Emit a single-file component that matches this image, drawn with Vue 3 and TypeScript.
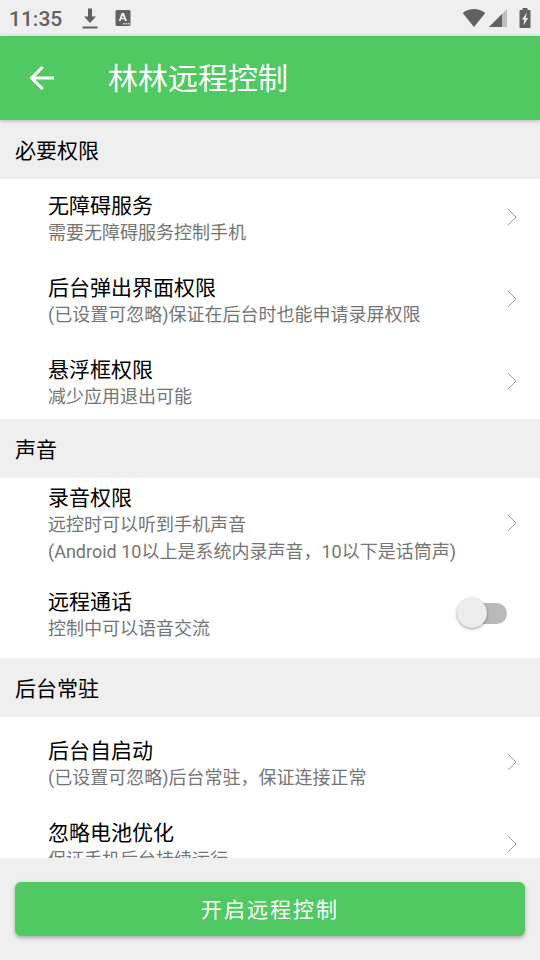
<script setup lang="ts">
import { ref } from 'vue'

interface Row {
  id: string
  title: string
  lines: string[]
  toggle?: boolean
}

interface Section {
  id: string
  name: string
  rows: Row[]
}

const voiceCall = ref<boolean>(false)

const sections: Section[] = [
  {
    id: 'required',
    name: '必要权限',
    rows: [
      { id: 'accessibility', title: '无障碍服务', lines: ['需要无障碍服务控制手机'] },
      { id: 'popup', title: '后台弹出界面权限', lines: ['(已设置可忽略)保证在后台时也能申请录屏权限'] },
      { id: 'overlay', title: '悬浮框权限', lines: ['减少应用退出可能'] },
    ],
  },
  {
    id: 'sound',
    name: '声音',
    rows: [
      {
        id: 'record',
        title: '录音权限',
        lines: ['远控时可以听到手机声音', '(Android 10以上是系统内录声音，10以下是话筒声)'],
      },
      { id: 'call', title: '远程通话', lines: ['控制中可以语音交流'], toggle: true },
    ],
  },
  {
    id: 'background',
    name: '后台常驻',
    rows: [
      { id: 'autostart', title: '后台自启动', lines: ['(已设置可忽略)后台常驻，保证连接正常'] },
      { id: 'battery', title: '忽略电池优化', lines: ['保证手机后台持续运行'] },
    ],
  },
]
</script>

<template>
  <div class="screen">
    <div class="status">
      <span class="time">11:35</span>
      <svg class="download" width="16" height="22" viewBox="0 0 16 22" aria-hidden="true">
        <path d="M6 1.500h4v8h4L8 16 2 9.500h4z" />
        <path d="M0.500 19.500h15v2h-15z" />
      </svg>
      <svg class="keyboard" width="16" height="18" viewBox="0 0 16 18" aria-hidden="true">
        <rect x="0.500" y="1" width="15" height="16" rx="1.500" />
        <path class="cut" fill-rule="evenodd" d="M6.600 4h2.400l3 8h-2l-.6-1.700H6.200L5.600 12H3.700zM7.800 6.200 6.800 8.900h2z" />
        <path class="cut" d="M8 14h1.500v1.500H8zM10.700 14h1.500v1.500h-1.500zM13.200 14h1.300v1.500h-1.300z" />
      </svg>
      <svg class="wifi" width="24" height="20" viewBox="0 0 24 20" aria-hidden="true">
        <path d="M12 19 0.700 5C4 2.200 8 1 12 1s8 1.200 11.300 4z" />
      </svg>
      <svg class="signal" width="18" height="18" viewBox="0 0 18 18" aria-hidden="true">
        <path class="dim" d="M18 0v18H0z" />
        <path d="M13 5v13H0z" />
      </svg>
      <svg class="battery" width="12" height="20" viewBox="0 0 12 20" aria-hidden="true">
        <path d="M3.500 0h5v2H10.500q1 0 1 1v16q0 1-1 1h-9q-1 0-1-1V3q0-1 1-1h2z" />
        <path class="cut" d="M7.800 4.500 3 11.500h2.300l-1 6L9.200 10H6.700z" />
      </svg>
    </div>

    <header class="bar">
      <button class="back" type="button" aria-label="返回">
        <svg width="24" height="24" viewBox="0 0 24 24" aria-hidden="true">
          <path d="M24 12H1.500M12.800 0.900 1.700 12l11.100 11.100" />
        </svg>
      </button>
      <h1>林林远程控制</h1>
    </header>

    <main class="content">
      <section v-for="section in sections" :key="section.id">
        <h2>{{ section.name }}</h2>
        <div class="rows" :class="section.id">
          <template v-for="row in section.rows" :key="row.id">
            <label v-if="row.toggle" class="row" :for="row.id">
              <span class="text">
                <span class="title">{{ row.title }}</span>
                <span v-for="line in row.lines" :key="line" class="line">{{ line }}</span>
              </span>
              <input :id="row.id" v-model="voiceCall" class="switch" type="checkbox" role="switch" />
            </label>
            <button v-else class="row" type="button">
              <span class="text">
                <span class="title">{{ row.title }}</span>
                <span v-for="line in row.lines" :key="line" class="line">{{ line }}</span>
              </span>
              <svg class="chevron" width="10" height="18" viewBox="0 0 10 18" aria-hidden="true">
                <path d="M0.800 0.800 9 9l-8.200 8.200" />
              </svg>
            </button>
          </template>
        </div>
      </section>
    </main>

    <footer class="footer">
      <button class="start" type="button">开启远程控制</button>
    </footer>
  </div>
</template>

<style>
body {
  margin: 0;
}
</style>

<style scoped>
.screen {
  display: flex;
  flex-direction: column;
  height: 100vh;
  overflow: hidden;
  background: #efefef;
  color: #000;
  font-family: Roboto, 'Noto Sans CJK SC', sans-serif;
}

button {
  border: 0;
  font-family: inherit;
  cursor: pointer;
}

.status {
  display: flex;
  flex: none;
  align-items: center;
  height: 36px;
  padding: 0 9px;
  fill: #616161;
}

.time {
  padding-top: 2px;
  color: #616161;
  font-size: 21px;
  font-weight: 500;
  line-height: 34px;
}

.download {
  margin-left: 20px;
}

.keyboard {
  margin-left: 17px;
}

.wifi {
  margin-left: auto;
}

.signal {
  margin-left: 3px;
}

.battery {
  margin-left: 12px;
}

.cut {
  fill: #efefef;
}

.dim {
  fill: #bdbdbd;
}

.bar {
  position: relative;
  display: flex;
  flex: none;
  align-items: center;
  gap: 42px;
  height: 84px;
  padding: 0 18px;
  background: #50c963;
  box-shadow: 0 1px 4px rgba(0, 0, 0, 0.25);
  color: #fff;
}

.back {
  display: flex;
  padding: 12px;
  background: none;
}

.back path {
  fill: none;
  stroke: #fff;
  stroke-width: 3;
}

h1 {
  margin: 0;
  padding-top: 2px;
  font-size: 30px;
  font-weight: 400;
  line-height: 40px;
}

.content {
  flex: 1;
  min-height: 0;
  overflow-y: auto;
  scrollbar-width: none;
}

h2 {
  margin: 0;
  padding: 4px 15px 0;
  font-size: 21px;
  font-weight: 400;
  line-height: 55px;
}

.rows {
  display: flex;
  flex-direction: column;
  gap: 8px;
  background: #fff;
}

.required {
  padding: 1px 0;
}

.sound {
  padding-bottom: 8px;
}

.background {
  padding: 8px 0;
}

.row {
  display: flex;
  align-items: center;
  justify-content: space-between;
  box-sizing: border-box;
  width: 100%;
  min-height: 74px;
  padding: 0 23px 0 48px;
  background: none;
  color: #000;
  text-align: left;
  cursor: pointer;
}

.text {
  display: flex;
  flex-direction: column;
  padding: 7px 0 3px;
}

.title {
  font-size: 21px;
  line-height: 26px;
}

.line {
  color: #757575;
  font-size: 18px;
  line-height: 27px;
}

.chevron {
  flex: none;
  fill: none;
  stroke: #a0a0a0;
}

.switch {
  display: flex;
  flex: none;
  align-items: center;
  width: 50px;
  height: 21px;
  margin: 0 10px 0 0;
  border-radius: 11px;
  appearance: none;
  background: #b9b9b9;
  cursor: pointer;
}

.switch::before {
  width: 30px;
  height: 30px;
  border-radius: 50%;
  background: #ececec;
  box-shadow: 0 1px 3px rgba(0, 0, 0, 0.4);
  content: '';
}

.switch:checked {
  justify-content: flex-end;
  background: #a7e4b1;
}

.switch:checked::before {
  background: #50c963;
}

.footer {
  flex: none;
  padding: 24px 15px;
}

.start {
  display: block;
  width: 100%;
  height: 54px;
  padding: 0 0 2px;
  border-radius: 6px;
  background: #50c963;
  box-shadow: 0 2px 4px rgba(0, 0, 0, 0.3);
  color: #fff;
  font-size: 21px;
  letter-spacing: 2px;
}
</style>
